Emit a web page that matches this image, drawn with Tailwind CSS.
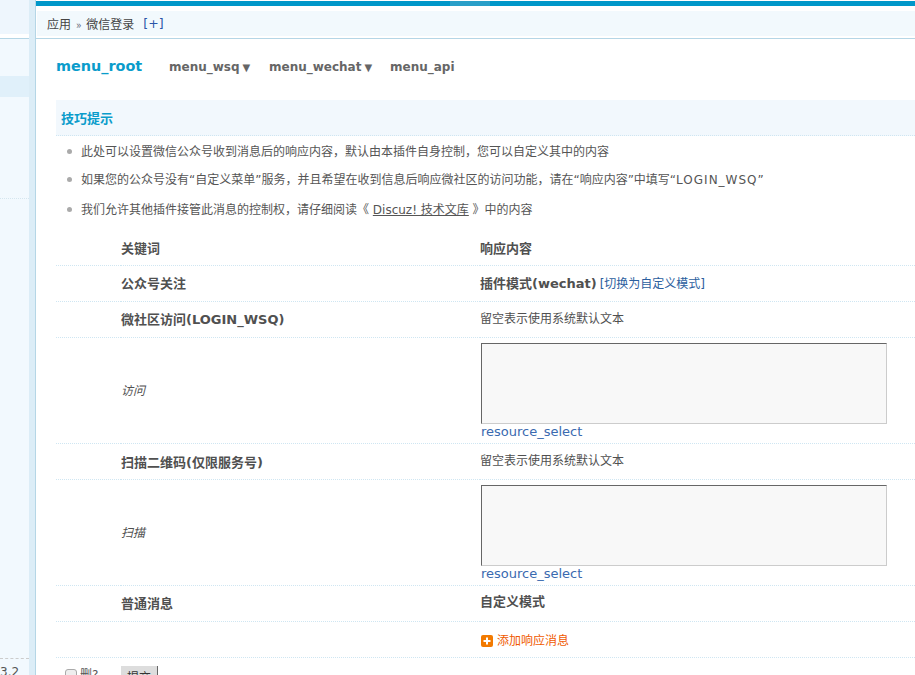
<!DOCTYPE html>
<html lang="zh">
<head>
<meta charset="utf-8">
<script src="https://cdn.jsdelivr.net/npm/@tailwindcss/browser@4"></script>
</head>
<body class="bg-white">
<div class="flex w-[915px] h-[675px] overflow-hidden bg-white text-[12px] leading-[16px] text-[#505050] font-['DejaVu_Sans','Noto_Sans_CJK_SC',sans-serif]">
  <aside class="w-[29px] h-full shrink-0 flex flex-col bg-[#f2f9fe] [&>*]:shrink-0">
    <div class="h-[34px] bg-[#eef6fd]"></div>
    <div class="h-[4px] bg-white"></div>
    <div class="h-[1px] bg-[#b5d6e6]"></div>
    <div class="h-[37px] bg-[#f2f9fe]"></div>
    <div class="h-[21px] bg-[#e0f0fa]"></div>
    <div class="h-[102px] border-b border-dotted border-[#d5e6ef]"></div>
    <div class="h-[460px] border-b border-dashed border-[#cccccc]"></div>
    <div class="pt-[6px] pl-0 text-[#555] whitespace-nowrap leading-[14px]">3.2</div>
  </aside>
  <div class="w-[6px] h-full shrink-0 bg-[#dcedf7] border-r border-[#b5d6e6] box-content"></div>
  <main class="flex-1 min-w-0 flex flex-col [&>*]:shrink-0">
    <div class="h-[1px] bg-white"></div>
    <div class="h-[5px] bg-[#0097c9] flex justify-end pr-[425px]"><div class="w-[40px] h-full bg-[#2a9fc8]"></div></div>
    <div class="h-[5px]"></div>
    <div class="h-[25px] ml-[1px] bg-[#f2f9fd] flex items-center pl-[10px] text-[#444] font-['Noto_Sans_CJK_SC',sans-serif]">
      <span>应用</span><span class="mx-[5px] text-[#667] text-[11px]">»</span><span>微信登录</span><a class="ml-[9px] text-[12.5px] text-[#2b55a8] font-['DejaVu_Sans',sans-serif]">[+]</a>
    </div>
    <div class="h-[2px]"></div>
    <div class="h-[1px] bg-[#b5d6e6]"></div>
    <div class="h-[61px] pl-[20px] flex items-center font-bold whitespace-nowrap pb-[6px]">
      <span class="w-[113px] text-[14.4px] text-[#0a9ccb] pb-[1px]">menu_root</span>
      <span class="w-[100px] text-[#666] pt-[1px]">menu_wsq<span class="text-[10px] ml-[3px]">▼</span></span>
      <span class="w-[121px] text-[#666] pt-[1px]">menu_wechat<span class="text-[10px] ml-[3px]">▼</span></span>
      <span class="text-[#666]">menu_api</span>
    </div>
    <div class="ml-[20px]">
      <div class="h-[36px] bg-[#f2f8fd] border-b border-dotted border-[#cfe6f2] pl-[5px] flex items-center font-bold text-[#0a9ccb] font-['Noto_Sans_CJK_SC',sans-serif] text-[13px]">技巧提示</div>
      <ul class="text-[#555] h-[93px] whitespace-nowrap">
        <li class="h-[28px] flex items-center pl-[11px] gap-[9px] pt-[3px]"><span class="size-[5px] rounded-full bg-[#aaa]"></span>此处可以设置微信公众号收到消息后的响应内容，默认由本插件自身控制，您可以自定义其中的内容</li>
        <li class="h-[29px] flex items-center pl-[11px] gap-[9px] pt-[2px]"><span class="size-[5px] rounded-full bg-[#aaa]"></span><span>如果您的公众号没有“自定义菜单”服务，并且希望在收到信息后响应微社区的访问功能，请在“响应内容”中填写“<span class="tracking-[1px]">LOGIN_WSQ</span>”</span></li>
        <li class="h-[30px] flex items-center pl-[11px] gap-[9px] pt-[3px]"><span class="size-[5px] rounded-full bg-[#aaa]"></span><span>我们允许其他插件接管此消息的控制权，请仔细阅读《 <a class="underline">Discuz! 技术文库</a> 》中的内容</span></li>
      </ul>
      <div class="grid grid-cols-[65px_359px_1fr] [&>div]:flex [&>div]:items-center [&>div]:border-b [&>div]:border-dotted [&>div]:border-[#cfe6f2]">
        <div class="h-[37px]"></div><div class="font-bold text-[13px] pt-[3px]">关键词</div><div class="font-bold text-[13px] pt-[3px]">响应内容</div>

        <div class="h-[36px]"></div><div class="font-bold text-[13px]">公众号关注</div><div><b class="text-[13px]">插件模式(wechat)</b><a class="ml-[3px] text-[#2b5e9e]">[切换为自定义模式]</a></div>

        <div class="h-[36px]"></div><div class="font-bold text-[13px]">微社区访问(LOGIN_WSQ)</div><div class="pb-[2px]">留空表示使用系统默认文本</div>

        <div class="h-[106px]"></div><div class="italic">访问</div>
        <div class="flex-col !items-start pl-[1px] pt-[5px]">
          <textarea class="block w-[406px] h-[81px] bg-[#f8f8f8] border border-t-[#666] border-l-[#666] border-r-[#ccc] border-b-[#ccc] resize-none"></textarea>
          <a class="text-[13px] text-[#3a6ab0] leading-[16px]">resource_select</a>
        </div>

        <div class="h-[36px]"></div><div class="font-bold text-[13px] pt-[2px]">扫描二维码(仅限服务号)</div><div class="pb-[2px]">留空表示使用系统默认文本</div>

        <div class="h-[106px]"></div><div class="italic">扫描</div>
        <div class="flex-col !items-start pl-[1px] pt-[5px]">
          <textarea class="block w-[406px] h-[81px] bg-[#f8f8f8] border border-t-[#666] border-l-[#666] border-r-[#ccc] border-b-[#ccc] resize-none"></textarea>
          <a class="text-[13px] text-[#3a6ab0] leading-[16px]">resource_select</a>
        </div>

        <div class="h-[36px]"></div><div class="font-bold text-[13px]">普通消息</div><div class="font-bold text-[13px] pb-[3px]">自定义模式</div>

        <div class="h-[36px]"></div><div></div>
        <div class="gap-[4px] pl-[1px] pt-[3px] text-[#f05a00]">
          <svg width="12" height="12" viewBox="0 0 12 12"><rect width="12" height="12" rx="2" fill="#f27a00"/><path d="M5 2.5h2V5h2.5v2H7v2.5H5V7H2.5V5H5z" fill="#fff"/></svg>
          <a>添加响应消息</a>
        </div>
      </div>
      <div class="flex items-start pt-[8px] whitespace-nowrap">
        <label class="w-[65px] pl-[9px] mt-[1px] flex items-center gap-[3px] text-[#555]"><span class="size-[12px] rounded-[3px] border border-[#aaa] bg-[#eee]"></span>删?</label>
        <button class="w-[37px] h-[24px] bg-[#ddd] border-r border-b border-[#666] text-[#333] leading-[16px]">提交</button>
      </div>
    </div>
  </main>
</div>
</body>
</html>
